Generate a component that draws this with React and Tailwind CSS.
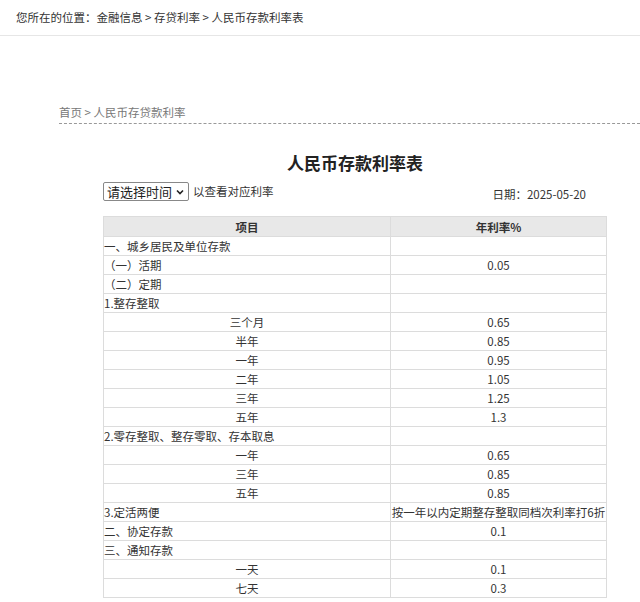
import React from "react";

const rows = [
  { name: "一、城乡居民及单位存款", rate: "", center: false },
  { name: "（一）活期", rate: "0.05", center: false },
  { name: "（二）定期", rate: "", center: false },
  { name: "1.整存整取", rate: "", center: false },
  { name: "三个月", rate: "0.65", center: true },
  { name: "半年", rate: "0.85", center: true },
  { name: "一年", rate: "0.95", center: true },
  { name: "二年", rate: "1.05", center: true },
  { name: "三年", rate: "1.25", center: true },
  { name: "五年", rate: "1.3", center: true },
  { name: "2.零存整取、整存零取、存本取息", rate: "", center: false },
  { name: "一年", rate: "0.65", center: true },
  { name: "三年", rate: "0.85", center: true },
  { name: "五年", rate: "0.85", center: true },
  { name: "3.定活两便", rate: "按一年以内定期整存整取同档次利率打6折", center: false },
  { name: "二、协定存款", rate: "0.1", center: false },
  { name: "三、通知存款", rate: "", center: false },
  { name: "一天", rate: "0.1", center: true },
  { name: "七天", rate: "0.3", center: true },
];

const App = () => {
  return (
    <div
      className="w-[640px] h-[602px] bg-white text-[#333] overflow-hidden"
      style={{ fontFamily: '"Noto Sans CJK SC", "Noto Sans", sans-serif' }}
    >
      {/* top location bar */}
      <div className="h-[36px] border-b border-[#e6e6e6] pl-4 flex items-center text-[11.5px] text-[#333]">
        您所在的位置：金融信息 &gt; 存贷利率 &gt; 人民币存款利率表
      </div>

      {/* inner breadcrumb */}
      <div className="pl-[59px] mt-[68px]">
        <div className="border-b border-dashed border-[#999] text-[11.5px] text-[#777] leading-[17px] pb-[2px]">
          首页 &gt; 人民币存贷款利率
        </div>
      </div>

      <div className="ml-[103px] w-[504px]">
        <h1 className="text-center text-[17px] font-bold text-[#222] mt-[27px] leading-[24px]">
          人民币存款利率表
        </h1>

        <div className="flex items-end justify-between mt-[7px]">
          <div className="flex items-center gap-1">
            <div className="h-[19px] border border-[#888] rounded-[2px] px-[3px] flex items-center gap-[3px] text-[13px] text-[#222] bg-white">
              <span>请选择时间</span>
              <svg width="10" height="10" viewBox="0 0 10 10" fill="none">
                <path d="M2 3.5 L5 6.5 L8 3.5" stroke="#222" strokeWidth="1.6" />
              </svg>
            </div>
            <span className="text-[11.5px]">以查看对应利率</span>
          </div>
          <div className="text-[11.5px] mr-[21px] leading-[14px]">日期：2025-05-20</div>
        </div>

        <table className="mt-[15px] w-[504px] border-collapse text-[11.5px] text-[#333]">
          <thead>
            <tr className="bg-[#e8e8e8] h-[20px]">
              <th className="w-[287px] border border-[#dcdcdc] font-bold p-0 leading-[18px]">项目</th>
              <th className="border border-[#dcdcdc] font-bold p-0 leading-[18px]">年利率%</th>
            </tr>
          </thead>
          <tbody>
            {rows.map((r, i) => (
              <tr key={i} className="h-[19px]">
                <td
                  className={`border border-[#dcdcdc] p-0 leading-[17px] ${
                    r.center ? "text-center" : "text-left"
                  }`}
                >
                  {r.name}
                </td>
                <td className="border border-[#dcdcdc] p-0 leading-[17px] text-center whitespace-nowrap">
                  {r.rate}
                </td>
              </tr>
            ))}
          </tbody>
        </table>
      </div>
    </div>
  );
};

export default App;
